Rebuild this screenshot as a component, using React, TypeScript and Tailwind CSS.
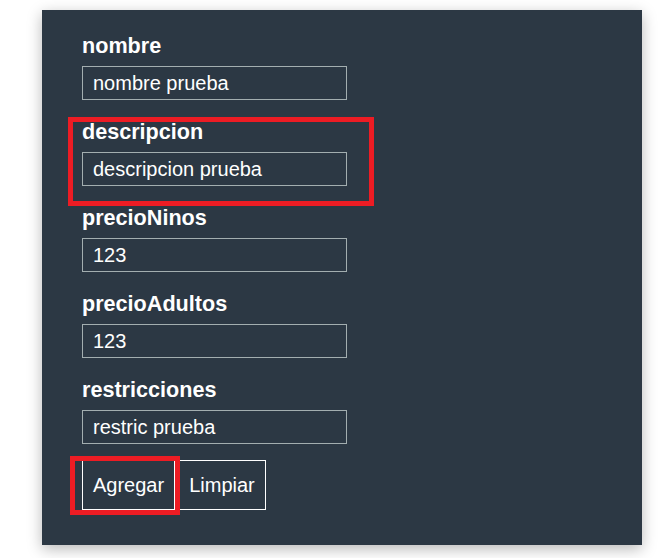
import { useState } from 'react';

const fields = [
  { name: 'nombre', value: 'nombre prueba' },
  { name: 'descripcion', value: 'descripcion prueba' },
  { name: 'precioNinos', value: '123' },
  { name: 'precioAdultos', value: '123' },
  { name: 'restricciones', value: 'restric prueba' },
];

const App = () => {
  const [values, setValues] = useState<Record<string, string>>(
    Object.fromEntries(fields.map((f) => [f.name, f.value]))
  );

  return (
    <div className="min-h-screen bg-white pt-[10px] pl-[42px] font-['Liberation_Sans',Arial,sans-serif]">
      <div className="relative w-[600px] bg-[#2c3844] pt-[23px] pb-[35px] pl-[40px] shadow-[0_4px_14px_rgba(0,0,0,0.28)]">
        {/* Form fields */}
        <div className="flex flex-col gap-[19px]">
          {fields.map((f) => (
            <div key={f.name} className="flex flex-col">
              <label className="text-[21.6px] leading-[25px] font-bold text-white mb-[8px]">{f.name}</label>
              <input
                value={values[f.name]}
                onChange={(e) => setValues({ ...values, [f.name]: e.target.value })}
                className="w-[265px] h-[34px] px-[10px] border border-[#a3aeb0] bg-transparent text-white text-[20px] leading-[23px] outline-none"
              />
            </div>
          ))}
        </div>

        {/* Buttons */}
        <div className="flex gap-[3px] mt-[16px]">
          <button className="h-[50px] px-[10px] border border-white text-white text-[20px] leading-[23px]">Agregar</button>
          <button className="h-[50px] px-[10px] border border-white text-white text-[20px] leading-[23px]">Limpiar</button>
        </div>

        {/* Annotation boxes */}
        <div className="absolute left-[26px] top-[107px] w-[306px] h-[89px] border-[5px] border-[#ed1c24] pointer-events-none" />
        <div className="absolute left-[28px] top-[446px] w-[110px] h-[59px] border-[5px] border-[#ed1c24] pointer-events-none" />
      </div>
    </div>
  );
};

export default App;
